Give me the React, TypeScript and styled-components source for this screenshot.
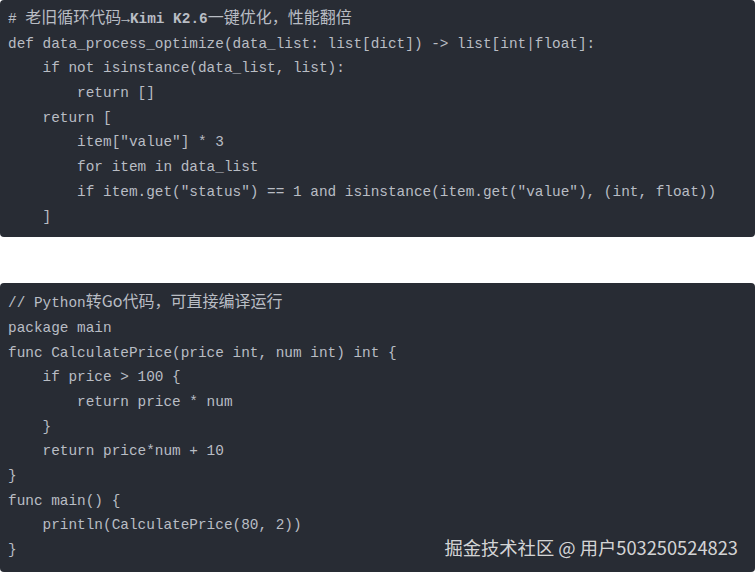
import React from "react";
import styled, { createGlobalStyle } from "styled-components";

const GlobalStyle = createGlobalStyle`
  html, body {
    margin: 0;
    padding: 0;
    background: #ffffff;
  }
`;

const Page = styled.div`
  display: flex;
  flex-direction: column;
  gap: 46px;
  width: 755px;
`;

const CodeBlock = styled.pre<{ $top: number; $bottom: number }>`
  position: relative;
  margin: 0;
  padding: ${(p) => p.$top}px 8px ${(p) => p.$bottom}px 8px;
  background: #282c34;
  border-radius: 4px;
  color: #b9bdc4;
  font-family: "Liberation Mono", "DejaVu Sans Mono", "Noto Sans CJK SC", monospace;
  font-size: 14.4px;
  line-height: 24.7px;
  overflow: hidden;
`;

const Line = styled.div`
  white-space: pre;
  height: 24.7px;
`;

const Cjk = styled.span`
  font-family: "Noto Sans CJK SC", sans-serif;
  font-size: 16px;
  line-height: 1;
`;

const Strong = styled.span`
  font-weight: 700;
`;

const Watermark = styled.div`
  position: absolute;
  right: 17px;
  bottom: 13px;
  font-family: "Noto Sans CJK SC", "Noto Sans", sans-serif;
  font-size: 18.3px;
  line-height: 24px;
  color: rgba(235, 235, 235, 0.9);
  white-space: nowrap;
`;

const pythonLines = [
  "def data_process_optimize(data_list: list[dict]) -> list[int|float]:",
  "    if not isinstance(data_list, list):",
  "        return []",
  "    return [",
  '        item["value"] * 3',
  "        for item in data_list",
  '        if item.get("status") == 1 and isinstance(item.get("value"), (int, float))',
  "    ]",
];

const goLines = [
  "package main",
  "func CalculatePrice(price int, num int) int {",
  "    if price > 100 {",
  "        return price * num",
  "    }",
  "    return price*num + 10",
  "}",
  "func main() {",
  "    println(CalculatePrice(80, 2))",
  "}",
];

export default function App() {
  return (
    <>
      <GlobalStyle />
      <Page>
        <CodeBlock $top={7} $bottom={8}>
          <Line>
            {"# "}
            <Cjk>老旧循环代码</Cjk>
            <Strong>→Kimi K2.6</Strong>
            <Cjk>一键优化，性能翻倍</Cjk>
          </Line>
          {pythonLines.map((l, i) => (
            <Line key={i}>{l}</Line>
          ))}
        </CodeBlock>
        <CodeBlock $top={8} $bottom={9}>
          <Line>
            {"// Python"}
            <Cjk>转Go代码，可直接编译运行</Cjk>
          </Line>
          {goLines.map((l, i) => (
            <Line key={i}>{l}</Line>
          ))}
          <Watermark>掘金技术社区 @ 用户503250524823</Watermark>
        </CodeBlock>
      </Page>
    </>
  );
}
